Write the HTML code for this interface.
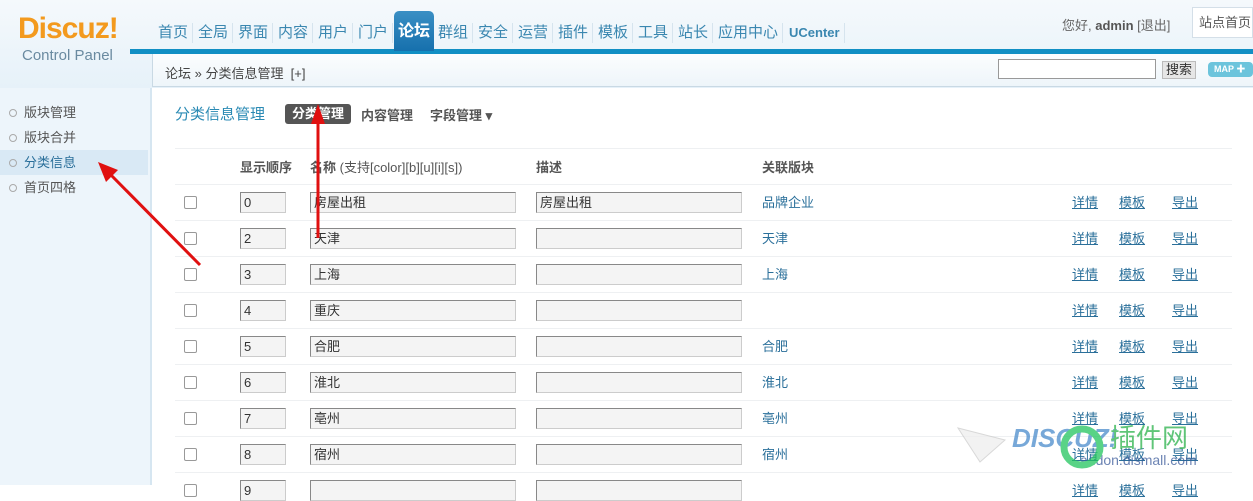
<!DOCTYPE html>
<html><head><meta charset="utf-8"><style>
*{margin:0;padding:0;box-sizing:border-box}
body{width:1253px;height:485px;overflow:hidden;background:#fff;font-family:"Liberation Sans","Noto Sans CJK SC",sans-serif;font-size:12px;color:#333;position:relative}
.hd{position:absolute;left:0;top:0;width:1253px;height:88px;background:linear-gradient(#f5f9fc,#e6f1f9)}
.logo{position:absolute;left:18px;top:12px;font:bold 30px "Liberation Sans",sans-serif;color:#f39a1e;letter-spacing:-1px}
.cp{position:absolute;left:22px;top:47px;font-size:15px;color:#6a8aa0}
.nv{position:absolute;top:23px;font-size:15px;color:#3a87b0;line-height:20px;height:20px;padding-right:4px;border-right:1px solid #d6e4ee}
.act{position:absolute;left:394px;top:11px;width:40px;height:40px;background:linear-gradient(#3a8fc4,#1670ad);border-radius:5px 5px 0 0;color:#fff;font-weight:bold;font-size:16px;text-align:center;line-height:42px}
.bar{position:absolute;left:130px;top:49px;width:1123px;height:5px;background:#118fc4}
.crumb{position:absolute;left:152px;top:54px;width:1101px;height:33px;background:linear-gradient(#fbfdfe,#eef5fa);border-bottom:1px solid #c9d9e4;border-left:1px solid #c9d9e4}
.crumb b{position:absolute;left:12px;top:9px;font-weight:normal;font-size:13px;color:#444}
.side{position:absolute;left:0;top:88px;width:152px;height:397px;background:#edf5fb;border-right:2px solid #d6e6f1}
.side div{height:25px;line-height:25px;padding-left:24px;font-size:13px;color:#555;position:relative;width:148px}
.side div:before{content:"";position:absolute;left:9px;top:9px;width:6px;height:6px;border:1px solid #aaa;border-radius:50%}
.side div.s{background:#d9e9f5;color:#2a6f9a}
.user{position:absolute;left:1062px;top:15px;font-size:13px;color:#666}
.site{position:absolute;left:1192px;top:7px;width:61px;height:31px;background:#fff;border:1px solid #d4dfe8;font-size:13px;color:#555;line-height:29px;padding-left:6px}
.sinp{position:absolute;left:998px;top:59px;width:158px;height:20px;border:1px solid #999;background:#fff}
.sbtn{position:absolute;left:1162px;top:61px;width:34px;height:18px;background:#e6e6e6;border:1px solid #bbb;font-size:13px;line-height:16px;text-align:center}
.map{position:absolute;left:1208px;top:62px;width:45px;height:15px;background:#6cc4dc;border-radius:4px;color:#fff;font-size:9px;font-weight:bold;line-height:15px;padding-left:6px}
.ttl{position:absolute;left:175px;top:103px;font-size:15px;color:#2a8ab4}
.tb{position:absolute;left:285px;top:104px;width:66px;height:20px;background:#555;border-radius:3px;color:#fff;font-weight:bold;font-size:13px;text-align:center;line-height:20px}
.t2{position:absolute;top:105px;font-size:13px;font-weight:bold;color:#555}
.hr{position:absolute;left:175px;width:1057px;height:1px;background:#eef0f2}
.th{position:absolute;top:157px;font-size:13px;font-weight:bold;color:#555}
.cb{position:absolute;left:184px;width:13px;height:13px;border:1px solid #999;border-radius:2px;background:#fff}
.in{position:absolute;height:21px;border:1px solid #888;border-right-color:#ccc;border-bottom-color:#ccc;background:#f4f4f4;font-size:13px;line-height:19px;padding-left:3px;color:#333}
.rel{position:absolute;left:762px;font-size:13px;color:#2a6f9a}
.lk{position:absolute;font-size:13px;color:#2a6f9a;text-decoration:underline}
</style></head><body>
<div class="hd"></div>
<div class="logo">Discuz!</div><div class="cp">Control Panel</div>
<div class="nv" style="left:158px">首页</div>
<div class="nv" style="left:198px">全局</div>
<div class="nv" style="left:238px">界面</div>
<div class="nv" style="left:278px">内容</div>
<div class="nv" style="left:318px">用户</div>
<div class="nv" style="left:358px">门户</div>
<div class="nv" style="left:438px">群组</div>
<div class="nv" style="left:478px">安全</div>
<div class="nv" style="left:518px">运营</div>
<div class="nv" style="left:558px">插件</div>
<div class="nv" style="left:598px">模板</div>
<div class="nv" style="left:638px">工具</div>
<div class="nv" style="left:678px">站长</div>
<div class="nv" style="left:718px">应用中心</div>
<div class="nv" style="left:789px;font-size:13px;font-weight:bold">UCenter</div>
<div class="bar"></div>
<div class="act">论坛</div>
<div class="user">您好, <b style="color:#555">admin</b> [退出]</div>
<div class="site">站点首页</div>
<div class="crumb"><b>论坛 » 分类信息管理 &nbsp;[+]</b></div>
<div class="sinp"></div><div class="sbtn">搜索</div><div class="map">MAP ✚</div>
<div class="side" style="padding-top:12px"><div>版块管理</div><div>版块合并</div><div class="s">分类信息</div><div>首页四格</div></div>
<div class="ttl">分类信息管理</div>
<div class="tb">分类管理</div>
<div class="t2" style="left:361px">内容管理</div>
<div class="t2" style="left:430px">字段管理 ▾</div>
<div class="hr" style="top:148px"></div>
<div class="th" style="left:240px">显示顺序</div>
<div class="th" style="left:310px">名称 <span style="font-weight:normal">(支持[color][b][u][i][s])</span></div>
<div class="th" style="left:536px">描述</div>
<div class="th" style="left:762px">关联版块</div>
<div id="rows"></div>
<script>
var d=[["0","房屋出租","房屋出租","品牌企业"],["2","天津","","天津"],["3","上海","","上海"],["4","重庆","",""],["5","合肥","","合肥"],["6","淮北","","淮北"],["7","亳州","","亳州"],["8","宿州","","宿州"],["9","","",""]];
var h="";d.forEach(function(r,i){var y=202+i*36;
h+='<div class="hr" style="top:'+(y-18)+'px"></div>';
h+='<div class="cb" style="top:'+(y-6)+'px"></div>';
h+='<div class="in" style="left:240px;top:'+(y-10)+'px;width:46px">'+r[0]+'</div>';
h+='<div class="in" style="left:310px;top:'+(y-10)+'px;width:206px">'+r[1]+'</div>';
h+='<div class="in" style="left:536px;top:'+(y-10)+'px;width:206px">'+r[2]+'</div>';
h+='<div class="rel" style="top:'+(y-10)+'px">'+r[3]+'</div>';
h+='<div class="lk" style="left:1072px;top:'+(y-10)+'px">详情</div><div class="lk" style="left:1119px;top:'+(y-10)+'px">模板</div><div class="lk" style="left:1172px;top:'+(y-10)+'px">导出</div>';});
document.getElementById("rows").innerHTML=h;
</script>
<svg style="position:absolute;left:0;top:0" width="1253" height="485">
<g stroke="#e01010" stroke-width="3" fill="#e01010">
<line x1="200" y1="265" x2="110" y2="174"/><polygon points="98,162 118,170 106,182" stroke="none"/>
<line x1="318" y1="238" x2="318" y2="122"/><polygon points="318,104 311,124 325,124" stroke="none"/>
</g>
<g opacity="0.75"><polygon points="958,428 1005,440 980,462" fill="#eee" stroke="#ccc"/>
<text x="1012" y="447" font-family="Liberation Sans" font-weight="bold" font-style="italic" font-size="26" fill="#4a8ccc">DISCUZ!</text>
<text x="1110" y="447" font-family="Noto Sans CJK SC" font-size="26" fill="#2bb24c">插件网</text>
<text x="1080" y="465" font-family="Liberation Sans" font-size="14" fill="#3a5a9a">addon.dismall.com</text>
<circle cx="1082" cy="447" r="18" fill="none" stroke="#22c55e" stroke-width="7"/></g>
</svg>
</body></html>
